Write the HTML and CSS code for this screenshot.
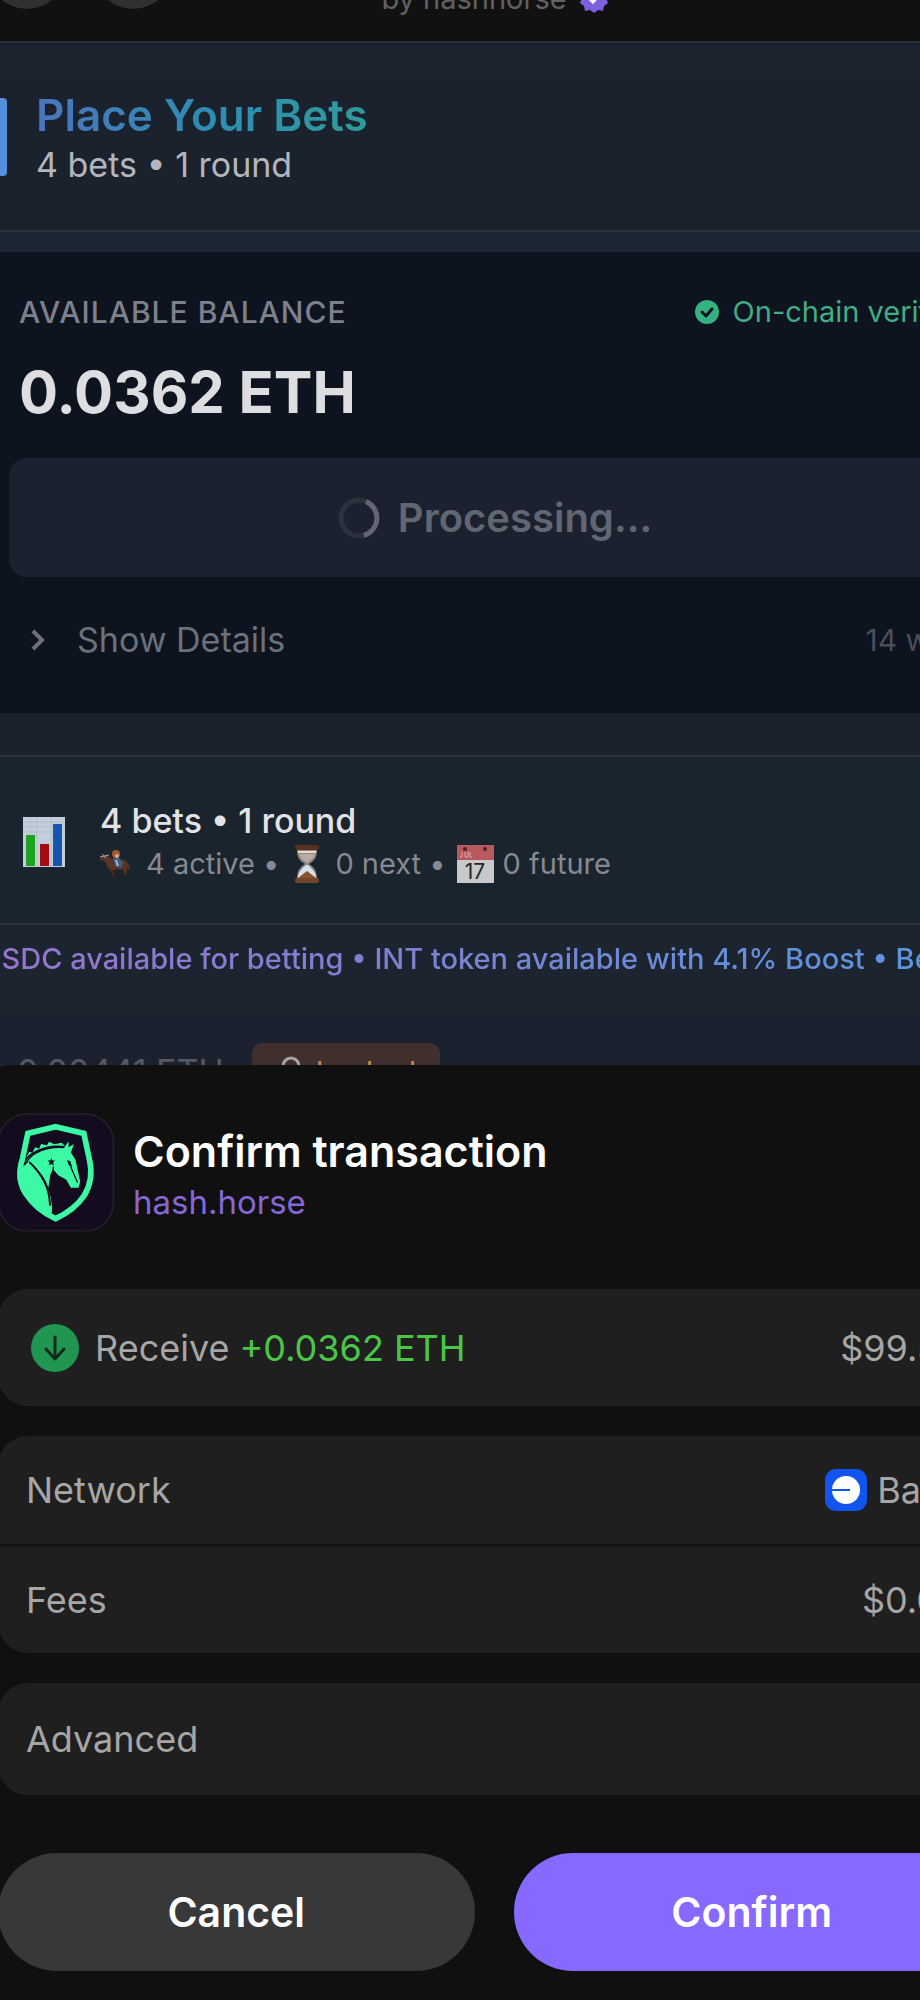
FILE: index.html
```
<!DOCTYPE html>
<html lang="en">
<head>
  <meta charset="UTF-8">
  <meta name="viewport" content="width=device-width, initial-scale=1.0">
  <title>Hash Horse</title>
  <link rel="stylesheet" href="styles.css">
</head>
<body>
  <div class="screen">
    <header class="topbar">
      <div class="topbar-buttons">
        <button class="round-btn" aria-label="Close"></button>
        <button class="round-btn" aria-label="Menu"></button>
      </div>
      <div class="author">
        <span>by hashhorse</span>
        <svg class="badge" viewBox="0 0 30 30">
          <path fill="#7d5fe0" d="M15 0l4 3 5-1 1 5 4 3-2 5 2 5-4 3-1 5-5-1-4 3-4-3-5 1-1-5-4-3 2-5-2-5 4-3 1-5 5 1z"/>
          <path d="M9 14l5 5 8-9" fill="none" stroke="#fff" stroke-width="3"/>
        </svg>
      </div>
    </header>

    <section class="bets-header">
      <span class="accent"></span>
      <div>
        <h1 class="bets-title">Place Your Bets</h1>
        <p class="bets-sub">4 bets • 1 round</p>
      </div>
    </section>

    <section class="balance">
      <div class="balance-top">
        <span class="balance-label">AVAILABLE BALANCE</span>
        <span class="verified">
          <svg width="24" height="24" viewBox="0 0 24 24">
            <circle cx="12" cy="12" r="12" fill="#34b27f"/>
            <path d="M7 12l4 4 6-7" fill="none" stroke="#0e1320" stroke-width="3" stroke-linecap="round" stroke-linejoin="round"/>
          </svg>
          On-chain verified
        </span>
      </div>
      <p class="amount">0.0362 ETH</p>
      <button class="processing" disabled>
        <svg width="42" height="42" viewBox="0 0 42 42" fill="none" stroke-width="5">
          <circle cx="21" cy="21" r="18" stroke="#2b313d"/>
          <path d="M28 4.500A18 18 0 0 1 26 38.300" stroke="#626672"/>
        </svg>
        Processing...
      </button>
      <div class="details">
        <button class="details-btn">
          <svg width="14" height="22" viewBox="0 0 14 22">
            <path d="M2 2l9 9-9 9" fill="none" stroke="#6c707b" stroke-width="4"/>
          </svg>
          Show Details
        </button>
        <span class="wins">14 wins</span>
      </div>
    </section>

    <section class="stats">
      <svg width="42" height="50" viewBox="0 0 42 50">
        <rect width="42" height="50" fill="#c3cedb"/>
        <path d="M0 5h42M0 10h42M0 15h42M7 0v50M14 0v50M28 0v50" stroke="#b2bfce"/>
        <rect x="3" y="18" width="9" height="31" fill="#1ea321"/>
        <rect x="17" y="27" width="9" height="22" fill="#a30d12"/>
        <rect x="30" y="7" width="9" height="42" fill="#1856ad"/>
      </svg>
      <div>
        <p class="stats-title">4 bets • 1 round</p>
        <p class="stats-sub">
          <svg class="rider" width="32" height="32" viewBox="0 0 32 32">
            <path fill="#5a3526" d="M1 9l4-2 3 1 4 3 8 0 6 2 3 4 1 6-3-4 0 5-2 4-1-6-8-1-3 2 0 7-2-7-3-3-2-5-3-3-3 1z"/>
            <path fill="#3b2218" d="M22 22l3 2 0 5-2-3zM11 21l4 2 2 8-4-5z"/>
            <path fill="#3f5f80" d="M13 10l6 0 4 5-2 5-6-2z"/>
            <path stroke="#a7b6c8" stroke-width="2" d="M16 12l2 6"/>
            <path stroke="#a9abb0" stroke-width="1" d="M0 9l9-2M2 6l4 4"/>
            <circle cx="16" cy="6" r="4" fill="#a75a30"/>
            <circle cx="17" cy="8" r="2" fill="#e2a57d"/>
          </svg>
          <span>4 active •</span>
          <svg class="glass" width="26" height="38" viewBox="0 0 26 38">
            <path fill="#8d8784" d="M3 5h20c0 8-3 11-8 14 5 3 8 7 8 15H3c0-8 3-12 8-15C6 16 3 13 3 5z"/>
            <path fill="#d7e1ea" d="M12 20h2c5 5 8 7 8 13H4c0-6 3-8 8-13z"/>
            <path fill="#b9a99f" d="M5 9h16c-1 4-4 6-8 9-4-3-7-5-8-9z"/>
            <path fill="#8a532c" d="M13 26l9 7H4z"/>
            <path stroke="#e9dccb" stroke-width="2" d="M4 7h18"/>
            <rect x="1" y="0" width="24" height="5" rx="2" fill="#58301f"/>
            <rect x="1" y="33" width="24" height="5" rx="2" fill="#74452a"/>
          </svg>
          <span>0 next •</span>
          <svg class="calendar" width="37" height="38" viewBox="0 0 37 38">
            <rect width="37" height="38" fill="#c9c8cb"/>
            <rect width="37" height="15" fill="#b7595d"/>
            <circle cx="8" cy="4" r="2" fill="#4a2028"/>
            <circle cx="28" cy="4" r="2" fill="#4a2028"/>
            <path stroke="#d9a9a9" stroke-width="1" fill="none" d="M5 7v5H3M8 7v5h3V7M13 7v5h2"/>
            <text x="18" y="34" text-anchor="middle" font-size="21" fill="#25262a">17</text>
          </svg>
          <span>0 future</span>
        </p>
      </div>
    </section>

    <div class="ticker">
      <span class="ticker-text">USDC available for betting • INT token available with 4.1% Boost • Bet</span>
    </div>

    <section class="bet-row">
      <span class="bet-amount">0.00441 ETH</span>
      <span class="locked">
        <svg width="30" height="34" viewBox="0 0 30 34">
          <path d="M7 18V12a8 8 0 0 1 16 0v6" fill="none" stroke="#a5a6ab" stroke-width="3"/>
          <rect x="3" y="16" width="24" height="17" rx="3" fill="#c9963f"/>
        </svg>
        Locked
      </span>
    </section>

    <section class="sheet">
      <div class="sheet-head">
        <svg class="app-icon" viewBox="-6 40 350 356">
          <rect x="-4" y="42" width="346" height="352" rx="84" fill="#140b1e" stroke="#272130" stroke-width="4"/>
          <path d="M168 80L253 100L270 180Q284 238 254 288Q224 332 168 357Q110 332 78 282Q48 236 68 176L84 100Z" fill="none" stroke="#3cf9a5" stroke-width="17"/>
          <path fill="#3cf9a5" d="M76 186Q96 158 136 148Q162 140 193 143L207 124L207 142L223 132L214 158L228 180L242 246L237 264L214 264L200 240L176 226L160 208L152 224L146 264Q134 224 90 186Z"/>
          <path fill="#3cf9a5" d="M88 184Q112 208 134 244Q162 292 156 349Q100 334 62 270Q50 220 76 192Z"/>
          <path fill="#3cf9a5" d="M78 174L88 156L98 158L106 142L118 146L124 132L142 136L148 125L164 133L186 128L196 138Q150 132 118 148Q96 156 78 174Z"/>
          <path d="M88 186Q116 212 134 246Q150 276 151 318" fill="none" stroke="#140b1e" stroke-width="6"/>
          <path d="M74 196Q96 154 148 145Q172 140 194 143" fill="none" stroke="#140b1e" stroke-width="4"/>
          <path fill="#140b1e" d="M202 180L212 184L218 202L208 196ZM155 174l3 8 8 0-6 6 3 9-8-5-8 5 3-9-7-6 9 0z"/>
          <path d="M213 200L234 248M161 200L160 214" fill="none" stroke="#140b1e" stroke-width="4"/>
        </svg>
        <div class="sheet-names">
          <h2 class="sheet-title">Confirm transaction</h2>
          <a class="sheet-link" href="#">hash.horse</a>
        </div>
      </div>

      <div class="card">
        <div class="row row-receive">
          <svg width="48" height="48" viewBox="0 0 48 48">
            <circle cx="24" cy="24" r="24" fill="#219653"/>
            <path d="M24 13v21M15 25l9 10 9-10" fill="none" stroke="#10291b" stroke-width="3" stroke-linecap="round" stroke-linejoin="round"/>
          </svg>
          <span>Receive <span class="plus">+0.0362 ETH</span></span>
          <span class="value">$99.53</span>
        </div>
      </div>

      <div class="card">
        <div class="row">
          <span>Network</span>
          <span class="value">
            <svg width="42" height="42" viewBox="0 0 42 42">
              <rect width="42" height="42" rx="11" fill="#1155ee"/>
              <circle cx="21" cy="21" r="14" fill="#fff"/>
              <path d="M7 21h18" stroke="#1155ee" stroke-width="2"/>
            </svg>
            Base
          </span>
        </div>
        <div class="row">
          <span>Fees</span>
          <span class="value">$0.02</span>
        </div>
      </div>

      <div class="card">
        <div class="row row-advanced">
          <span>Advanced</span>
        </div>
      </div>

      <div class="actions">
        <button class="action cancel">Cancel</button>
        <button class="action confirm">Confirm</button>
      </div>
    </section>
  </div>
</body>
</html>
```
FILE: styles.css
```
* {
  box-sizing: border-box;
}

body {
  margin: 0;
  background-color: #101010;
  color: #e3e3e6;
  font-family: Inter, "Liberation Sans", sans-serif;
  font-size: 29px;
  overflow-x: hidden;
}

h1, h2, p {
  margin: 0;
}

svg {
  display: block;
  flex-shrink: 0;
}

button {
  font-family: inherit;
  border: none;
  padding: 0;
  cursor: pointer;
}

/* content is wider than the window and runs off the right edge */
.screen {
  margin-right: -70px;
  overflow: hidden;
}

/* scrolled half out of view, so the items hang from the bottom */
.topbar {
  display: grid;
  grid-template-columns: 1fr auto 1fr;
  grid-template-rows: 100%;
  align-items: end;
  height: 41px;
  padding-bottom: 28px;
  background-color: #111;
}

.topbar-buttons {
  display: flex;
  gap: 28px;
  margin: 0 0 4px -12px;
}

.round-btn {
  width: 78px;
  height: 78px;
  border-radius: 50%;
  background-color: #303031;
}

.author {
  display: flex;
  align-items: flex-end;
  gap: 12px;
  line-height: 28px;
  color: #616163;
}

.badge {
  width: 30px;
  height: 30px;
}

.bets-header {
  display: flex;
  align-items: center;
  gap: 29px;
  height: 191px;
  border-top: 2px solid #2b303b;
  border-bottom: 2px solid #2a333f;
  background: linear-gradient(#1c212e, #1a222d 40%, #1b222e);
}

.accent {
  width: 7px;
  height: 78px;
  border-radius: 0 4px 4px 0;
  background-color: #5690dd;
}

.bets-title {
  width: max-content;
  padding-top: 2px;
  font-size: 44px;
  font-weight: 600;
  line-height: 54px;
  color: transparent;
  background: linear-gradient(90deg, #4c74bd, #2f8cb4 50%, #2f9b9b);
  -webkit-background-clip: text;
  background-clip: text;
}

.bets-sub {
  font-size: 34px;
  line-height: 46px;
  color: #b4b6bd;
}

.balance {
  border-top: 20px solid #1b2733;
  padding: 42px 19px 51px;
  background-color: #0e1320;
}

.balance-top, .details {
  display: flex;
  align-items: center;
  justify-content: space-between;
}

.balance-label {
  font-size: 30px;
  font-weight: 500;
  line-height: 36px;
  letter-spacing: 1px;
  color: #7d818c;
}

.verified {
  display: flex;
  align-items: center;
  gap: 14px;
  line-height: 36px;
  color: #42ad82;
}

.amount {
  margin-top: 26px;
  font-size: 58px;
  font-weight: 700;
  line-height: 72px;
  color: #dedde0;
}

.processing {
  display: flex;
  align-items: center;
  justify-content: center;
  gap: 18px;
  width: calc(100% + 20px);
  height: 119px;
  margin: 30px -10px 41px;
  border-radius: 18px;
  background-color: #1b212e;
  color: #626672;
  font-size: 40px;
  font-weight: 600;
}

.details-btn {
  display: flex;
  align-items: center;
  gap: 32px;
  padding-left: 12px;
  background: none;
  color: #6c707b;
  font-size: 34px;
  line-height: 44px;
}

.wins {
  font-size: 30px;
  color: #4a4e5a;
}

.stats {
  display: flex;
  align-items: center;
  gap: 35px;
  padding: 44px 23px 38px;
  border-top: 42px solid #1b222b;
  border-bottom: 2px solid #2a333e;
  background-color: #1a242e;
  box-shadow: inset 0 2px #2a333e;
}

.stats-title {
  font-size: 34px;
  font-weight: 500;
  line-height: 44px;
}

.stats-sub {
  display: flex;
  align-items: center;
  line-height: 42px;
  color: #868991;
}

.rider {
  margin-right: 14px;
}

.glass {
  margin: 0 15px;
}

.calendar {
  margin: 0 9px 0 11px;
}

.ticker {
  padding: 14px 0 35px;
  background-color: #1b242f;
  line-height: 40px;
  white-space: nowrap;
}

.ticker-text {
  display: block;
  margin-left: -20px;
  font-weight: 500;
  color: transparent;
  background: linear-gradient(90deg, #9775cf, #7b83d2 45%, #5797e0);
  -webkit-background-clip: text;
  background-clip: text;
}

.bet-row {
  display: flex;
  align-items: center;
  gap: 28px;
  padding: 29px 17px 0;
  background-color: #1b212e;
}

.bet-amount {
  font-size: 34px;
  color: #545965;
}

.locked {
  display: flex;
  align-items: center;
  gap: 10px;
  height: 56px;
  padding: 0 24px;
  border-radius: 10px;
  background-color: #402f2c;
  color: #d98649;
}

.sheet {
  position: relative;
  margin: -34px 0 0 -10px;
  padding: 48px 0 29px 8px;
  border-radius: 20px 0 0 0;
  background-color: #101010;
  color: #a6a6a6;
  font-size: 36px;
}

.sheet-head {
  display: flex;
  align-items: center;
  gap: 19px;
  margin-bottom: 57px;
}

.app-icon {
  width: 116px;
  height: 119px;
}

.sheet-names {
  padding-top: 6px;
}

.sheet-title {
  font-size: 43px;
  font-weight: 600;
  line-height: 52px;
  color: #fff;
}

.sheet-link {
  display: block;
  font-size: 33px;
  line-height: 50px;
  color: #8567d6;
  text-decoration: none;
}

.card {
  margin-bottom: 30px;
  border-radius: 30px;
  background-color: #1f1f1f;
}

.row {
  display: flex;
  align-items: center;
  height: 108px;
  padding: 0 29px 0 28px;
}

.row + .row {
  height: 109px;
  border-top: 3px solid #141414;
}

.row-receive {
  gap: 16px;
  height: 117px;
  padding-left: 33px;
}

.row-advanced {
  height: 112px;
}

.value {
  display: flex;
  align-items: center;
  gap: 10px;
  margin-left: auto;
}

.plus {
  color: #4ac746;
}

.actions {
  display: grid;
  grid-template-columns: 1fr 1fr;
  gap: 39px;
  margin-top: 58px;
}

.action {
  height: 118px;
  border-radius: 59px;
  font-size: 41px;
  font-weight: 600;
  color: #fff;
}

.cancel {
  background-color: #383838;
}

.confirm {
  background-color: #8769ff;
}
```
